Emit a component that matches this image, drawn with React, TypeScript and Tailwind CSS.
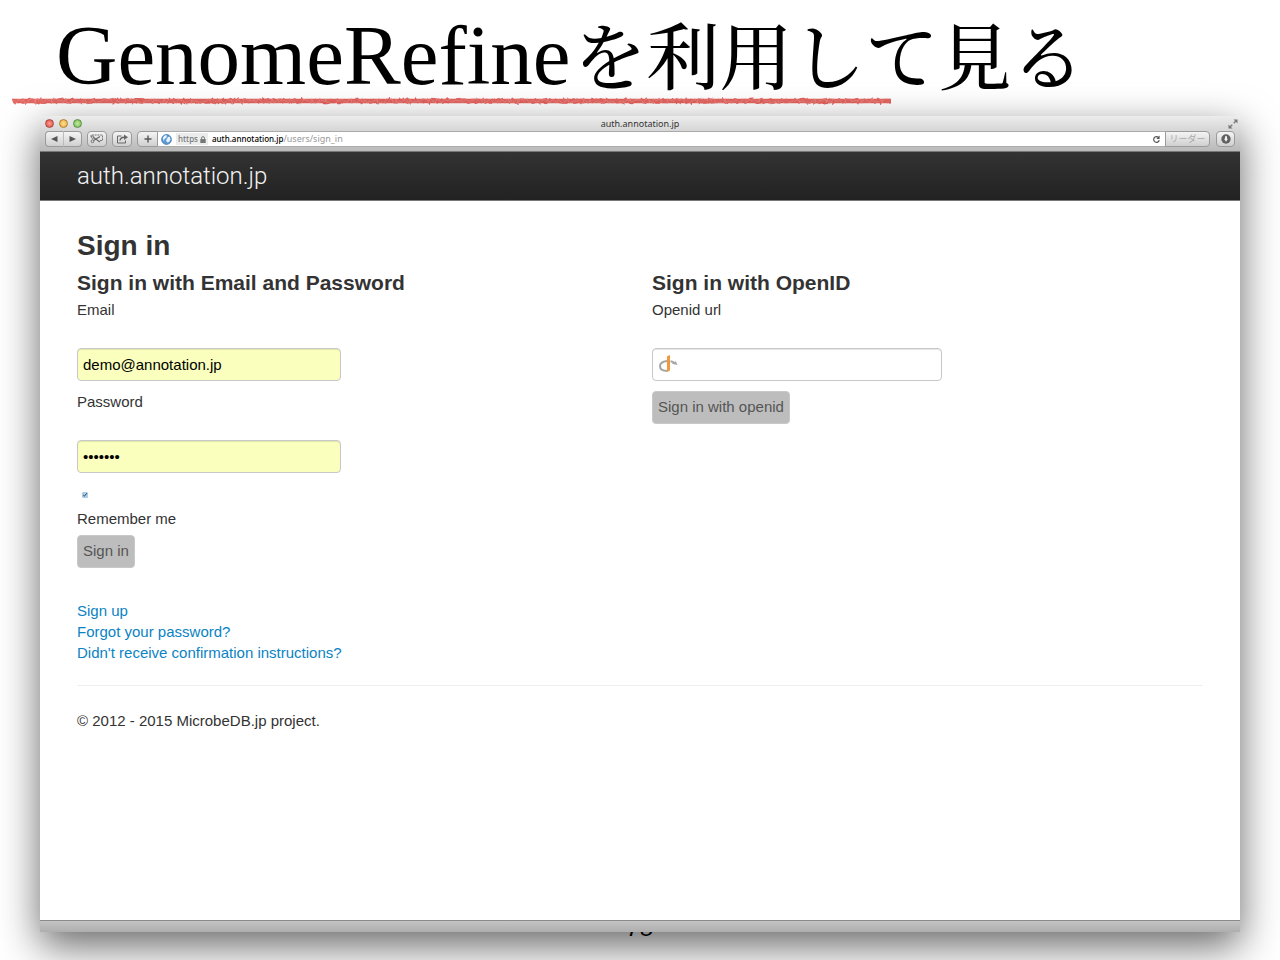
import React from "react";

const sans = "font-['Liberation_Sans',Arial,sans-serif]";
const chromeFont = "font-['Noto_Sans','Noto_Sans_CJK_JP',sans-serif]";
const toolButton =
  "flex h-4 items-center justify-center rounded-sm border border-[#9a9a9a] bg-linear-to-b from-[#f4f4f4] to-[#d0d0d0] text-[#666]";
const label = "text-[15px] leading-[22px]";
const field =
  "h-[33px] rounded border border-[#c8c8c8] px-[5px] text-[15px] text-black shadow-[inset_0_1px_1px_rgba(0,0,0,0.1)] outline-none";
const submit =
  "h-[33px] rounded border border-[#c8c8c8] bg-[#bdbdbd] px-[5px] text-[15px] text-[#555]";

function crayonPath(seed: number, mid: number, spread: number) {
  let value = seed;
  const next = () => {
    value = (value * 16807) % 2147483647;
    return value / 2147483647;
  };
  let d = `M1 ${mid}`;
  for (let x = 2; x < 879; x += 2) {
    d += ` L${(x + next() * 3 - 1).toFixed(1)} ${(mid + (next() - 0.5) * spread).toFixed(1)}`;
  }
  return d;
}

function CrayonLine() {
  return (
    <svg className="ml-3 block" width="880" height="8" viewBox="0 0 880 8" fill="none" aria-hidden="true">
      <path d="M1 4H879" stroke="#e2645f" strokeWidth="4.5" />
      <path d={crayonPath(17, 4, 5)} stroke="#e2605b" strokeWidth="1.6" />
      <path d={crayonPath(90187, 4, 5)} stroke="#e46a66" strokeWidth="1.4" />
      <path d={crayonPath(424299, 4, 6)} stroke="#f0a19e" strokeWidth="0.4" />
    </svg>
  );
}

function ScissorsIcon() {
  return (
    <svg width="14" height="10" viewBox="0 0 14 10" fill="none" stroke="currentColor" strokeWidth="0.9" aria-hidden="true">
      <path d="M1 3V1H12.500V6.500H10" strokeDasharray="2 .8" />
      <path d="M10 2.500 3.500 6.500M10 8 3.500 3.500" strokeWidth="1.100" />
      <circle cx="2.500" cy="7.300" r="1.400" />
      <circle cx="2.700" cy="3.200" r="1.200" />
    </svg>
  );
}

function ShareIcon() {
  return (
    <svg width="13" height="10" viewBox="0 0 13 10" fill="none" stroke="currentColor" aria-hidden="true">
      <path d="M5.500 2H1.500V9H9.500V6.500" />
      <path d="M4 6.500C4.300 4.200 6 3.200 8.300 3.200" strokeWidth="1.400" />
      <path d="M8 .5 12 3.200 8 6Z" fill="currentColor" stroke="none" />
    </svg>
  );
}

function GlobeIcon() {
  return (
    <svg width="11" height="11" viewBox="0 0 11 11" aria-hidden="true">
      <circle cx="5.500" cy="5.500" r="4.900" fill="#5f9bd3" stroke="#3f74b5" strokeWidth=".8" />
      <path d="M1.800 3.500 4 1.200 6 1.500 5.500 3.500 3.500 5 2.500 7ZM7 3 8.800 2.800 9.500 5.500 8 8 6.500 8.500 5 6.500Z" fill="#e7f2fb" />
    </svg>
  );
}

function LockIcon() {
  return (
    <svg width="6" height="7" viewBox="0 0 6 7" aria-hidden="true">
      <path d="M1.500 3.500V2.200A1.500 1.500 0 0 1 4.500 2.200V3.500" fill="none" stroke="#777" />
      <path d="M.3 3H5.700V7H.3Z" fill="#777" />
    </svg>
  );
}

function ReloadIcon() {
  return (
    <svg width="9" height="9" viewBox="0 0 9 9" aria-hidden="true">
      <path d="M6.500 2.300A2.900 2.900 0 1 0 7.300 5.300" fill="none" stroke="#555" strokeWidth="1.200" />
      <path d="M7.600.5V3.900H4.300Z" fill="#555" />
    </svg>
  );
}

function DownloadIcon() {
  return (
    <svg width="10" height="10" viewBox="0 0 10 10" aria-hidden="true">
      <circle cx="5" cy="5" r="4.700" fill="#606060" />
      <path d="M4 2.200H6V4.800H7L5 7.800 3 4.800H4Z" fill="#f2f2f2" />
    </svg>
  );
}

function ExpandIcon() {
  return (
    <svg width="10" height="10" viewBox="0 0 10 10" fill="#777" stroke="#777" aria-hidden="true">
      <path d="M5.500 .5H9.500V4.500ZM.5 5.500V9.500H4.500Z" stroke="none" />
      <path d="M5.700 4.300 8 2M4.300 5.700 2 8" strokeWidth="1.300" />
    </svg>
  );
}

function OpenIdIcon() {
  return (
    <svg width="20" height="18" viewBox="0 0 20 18" fill="none" aria-hidden="true">
      <path d="M9 6C4.500 6.500 2 8.500 2 11.200C2 14 5 15.800 9.500 16" stroke="#a5a5a5" strokeWidth="2" />
      <path d="M12.500 6.300C14.300 6.600 15.500 7.200 16.500 8" stroke="#a5a5a5" strokeWidth="2" />
      <path d="M17.800 6.200 19.500 10 13.800 8.700Z" fill="#a5a5a5" />
      <path d="M9 1.200 12 0V15.600L9 17Z" fill="#f0993f" />
    </svg>
  );
}

function BrowserChrome() {
  return (
    <div className={`${chromeFont} rounded-t bg-linear-to-b from-[#ececec] to-[#b8b8b8]`}>
      <div className="grid h-[15px] grid-cols-3 items-center px-[5px]">
        <div className="flex gap-[5px]">
          <span className="size-[9px] rounded-full border border-[#a84a45] bg-radial from-[#ff9b90] to-[#dc3f38]" />
          <span className="size-[9px] rounded-full border border-[#ad8035] bg-radial from-[#ffdf8d] to-[#e8a72c]" />
          <span className="size-[9px] rounded-full border border-[#5c8f47] bg-radial from-[#c1ea9b] to-[#6dba4a]" />
        </div>
        <div className="text-center text-[9px] leading-[12px] text-[#333]">auth.annotation.jp</div>
        <button type="button" aria-label="Full screen" className="-mr-[3px] justify-self-end">
          <ExpandIcon />
        </button>
      </div>
      <div className="flex h-[21px] items-start border-b border-[#777] px-[5px]">
        <div className="flex">
          <button type="button" aria-label="Back" className={`${toolButton} w-[19px] rounded-r-none border-r-[#bbb]`}>
            <svg width="7" height="6" viewBox="0 0 7 6" aria-hidden="true"><path d="M0 3 6.500 0V6Z" fill="#555" /></svg>
          </button>
          <button type="button" aria-label="Forward" className={`${toolButton} w-[18px] rounded-l-none border-l-0`}>
            <svg width="7" height="6" viewBox="0 0 7 6" aria-hidden="true"><path d="M7 3 .5 0V6Z" fill="#555" /></svg>
          </button>
        </div>
        <button type="button" aria-label="Web clip" className={`${toolButton} ml-[5px] w-[20px]`}>
          <ScissorsIcon />
        </button>
        <button type="button" aria-label="Share" className={`${toolButton} ml-[5px] w-[20px]`}>
          <ShareIcon />
        </button>
        <button type="button" aria-label="Add bookmark" className={`${toolButton} ml-[5px] w-[21px] rounded-r-none`}>
          <svg width="8" height="8" viewBox="0 0 8 8" aria-hidden="true"><path d="M4 .5V7.500M.5 4H7.500" stroke="#555" strokeWidth="1.400" /></svg>
        </button>
        <div className="flex h-4 flex-1 items-center border-y border-[#aaa] bg-white pl-[3px] text-[8px] leading-[12px]">
          <GlobeIcon />
          <span className="ml-1 flex items-center gap-[2px] bg-[#ececec] px-[2px] font-medium text-[#777]">
            https <LockIcon />
          </span>
          <span className="ml-1 font-medium text-black">auth.annotation.jp</span>
          <span className="text-[9px] text-[#999]">/users/sign_in</span>
          <button type="button" aria-label="Reload" className="mr-1 ml-auto">
            <ReloadIcon />
          </button>
        </div>
        <button type="button" className={`${toolButton} w-[45px] rounded-l-none text-[9px] leading-[12px] text-[#aaa]`}>
          リーダー
        </button>
        <button type="button" aria-label="Downloads" className={`${toolButton} ml-[6px] w-[19px]`}>
          <DownloadIcon />
        </button>
      </div>
    </div>
  );
}

export default function App() {
  return (
    <div className={`${sans} flex min-h-screen flex-col overflow-hidden bg-white text-[#333]`}>
      <header className="h-[116px]">
        <h1 className="flex h-[97px] items-baseline pl-[56px] font-['Liberation_Serif',serif] text-[85px] leading-[110px] whitespace-nowrap text-black">
          <span>GenomeRefine</span>
          <span className="ml-[3px] font-['Noto_Serif_CJK_JP','Noto_Sans_CJK_JP',serif] text-[73px] leading-[80px] font-medium">を利用して見る</span>
        </h1>
        <CrayonLine />
      </header>

      <main className="relative z-10 mx-10 flex flex-1 flex-col rounded-t shadow-[0_14px_40px_rgba(0,0,0,0.6)]">
        <BrowserChrome />
        <nav className="flex h-[49px] items-center border-b border-[#777] bg-linear-to-b from-[#333] to-[#222] px-[37px]">
          <a href="#home" className="font-['Roboto',sans-serif] text-[24px] leading-[28px] font-light text-[#f2f2f2]">
            auth.annotation.jp
          </a>
        </nav>

        <div className="flex-1 bg-white px-[37px] pt-[25px]">
          <h2 className="text-[28px] leading-[40px] font-bold">Sign in</h2>
          <div className="grid grid-cols-2 gap-6">
            <form onSubmit={(e) => e.preventDefault()} className="flex flex-col items-start">
              <h3 className="text-[21px] leading-[33px] font-bold">Sign in with Email and Password</h3>
              <label htmlFor="email" className={label}>Email</label>
              <input id="email" type="email" defaultValue="demo@annotation.jp" className={`${field} mt-[27px] w-[264px] bg-[#faffbd]`} />
              <label htmlFor="password" className={`${label} mt-[10px]`}>Password</label>
              <input id="password" type="password" defaultValue="1234567" className={`${field} mt-[27px] w-[264px] bg-[#faffbd]`} />
              <input id="remember" type="checkbox" defaultChecked className="mt-[19px] ml-[5px] size-[6px] accent-[#a9d0f0]" />
              <label htmlFor="remember" className={`${label} mt-[10px]`}>Remember me</label>
              <button type="submit" className={`${submit} mt-[5px]`}>Sign in</button>
            </form>
            <form onSubmit={(e) => e.preventDefault()} className="flex flex-col items-start">
              <h3 className="text-[21px] leading-[33px] font-bold">Sign in with OpenID</h3>
              <label htmlFor="openid" className={label}>Openid url</label>
              <div className="relative mt-[27px]">
                <input id="openid" type="text" className={`${field} w-[290px] bg-white pl-[28px]`} />
                <span className="pointer-events-none absolute top-[7px] left-[6px]">
                  <OpenIdIcon />
                </span>
              </div>
              <button type="submit" className={`${submit} mt-[10px]`}>Sign in with openid</button>
            </form>
          </div>
          <ul className="mt-8 text-[15px] leading-[21px] text-[#0a83c4]">
            <li><a href="#sign-up">Sign up</a></li>
            <li><a href="#forgot">Forgot your password?</a></li>
            <li><a href="#confirmation">Didn't receive confirmation instructions?</a></li>
          </ul>
          <hr className="mt-[22px] border-[#eee]" />
          <footer className="mt-6 text-[15px] leading-[22px]">© 2012 - 2015 MicrobeDB.jp project.</footer>
        </div>
        <div className="h-3 border-t border-[#8a8a8a] bg-linear-to-b from-[#c4c4c4] to-[#aeaeae]" />
      </main>

      <div className="-mt-5 h-12 text-center text-[24px] leading-[32px] text-black italic">78</div>
    </div>
  );
}
